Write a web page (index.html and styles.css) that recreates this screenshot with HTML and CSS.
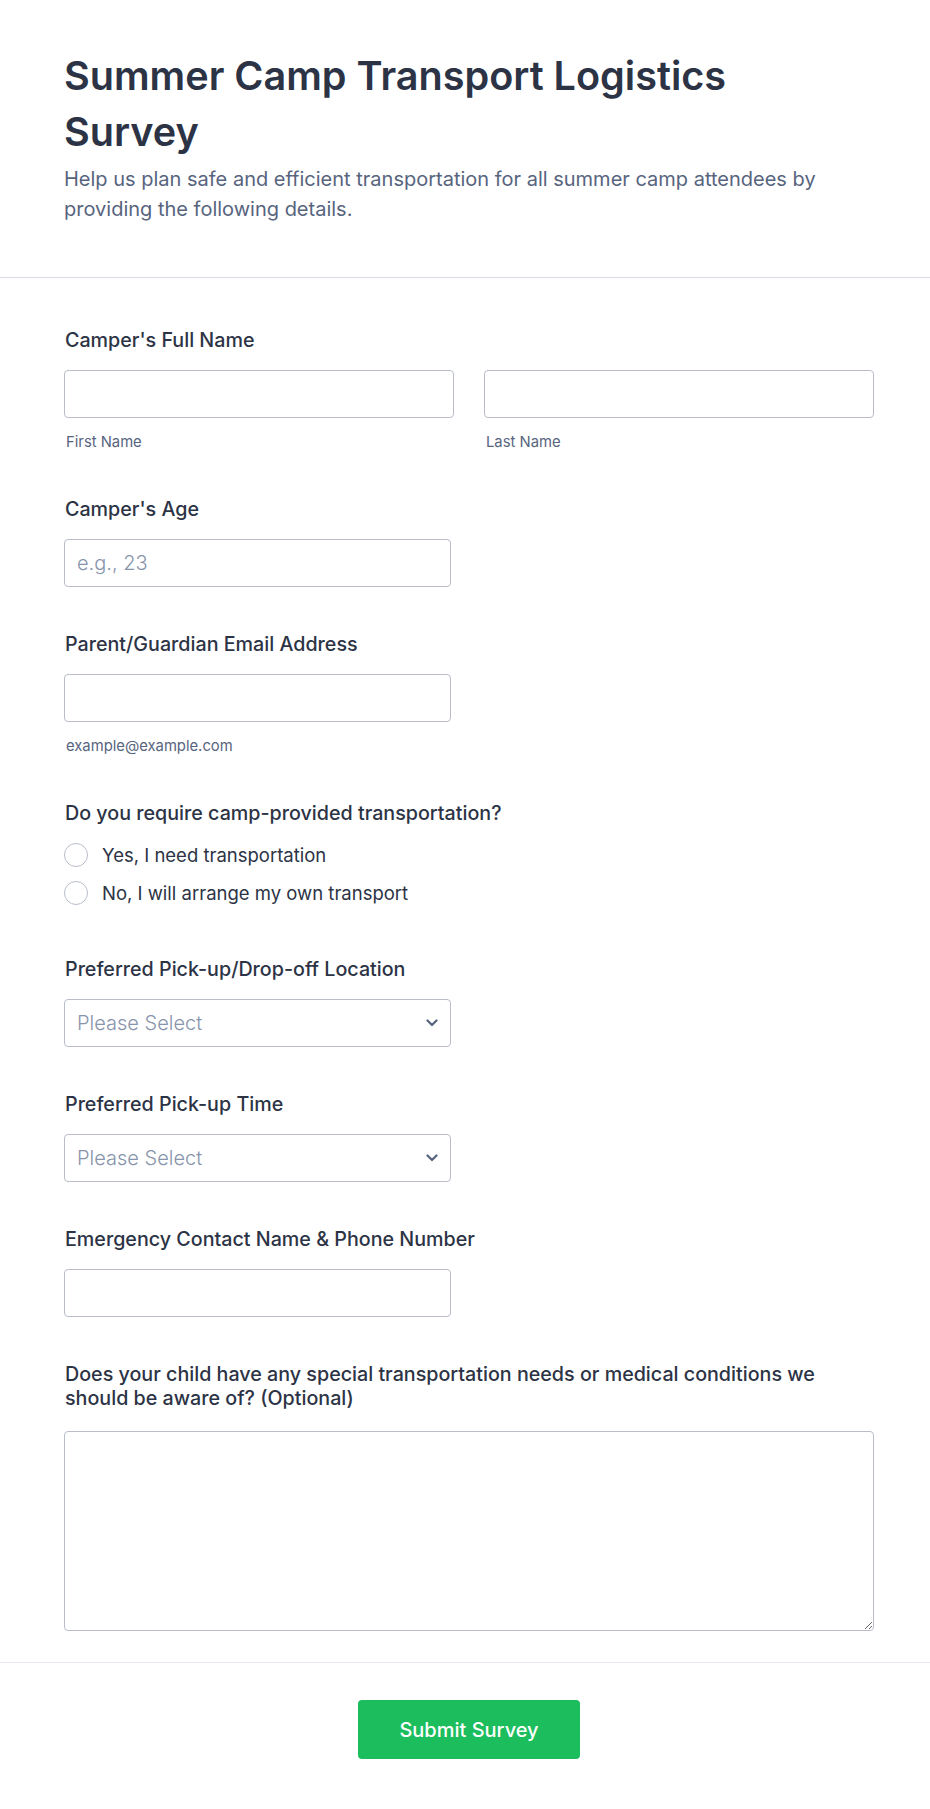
FILE: index.html
```html
<!DOCTYPE html>
<html lang="en">
<head>
<meta charset="utf-8">
<title>Summer Camp Transport Logistics Survey</title>
<link rel="stylesheet" href="styles.css">
</head>
<body>
<div class="page">
  <header class="header">
    <h1 class="title">Summer Camp Transport Logistics Survey</h1>
    <p class="subtitle">Help us plan safe and efficient transportation for all summer camp attendees by providing the following details.</p>
  </header>

  <form class="form">
    <div class="field">
      <div class="label">Camper's Full Name</div>
      <div class="name-grid">
        <div>
          <input class="input input-full" type="text">
          <div class="sublabel">First Name</div>
        </div>
        <div>
          <input class="input input-full" type="text">
          <div class="sublabel">Last Name</div>
        </div>
      </div>
    </div>

    <div class="field">
      <div class="label">Camper's Age</div>
      <input class="input input-half" type="text" placeholder="e.g., 23">
    </div>

    <div class="field">
      <div class="label">Parent/Guardian Email Address</div>
      <input class="input input-half" type="email">
      <div class="sublabel">example@example.com</div>
    </div>

    <div class="field">
      <div class="label">Do you require camp-provided transportation?</div>
      <div class="options">
        <label class="option"><span class="radio"></span><span>Yes, I need transportation</span></label>
        <label class="option"><span class="radio"></span><span>No, I will arrange my own transport</span></label>
      </div>
    </div>

    <div class="field">
      <div class="label">Preferred Pick-up/Drop-off Location</div>
      <div class="select input-half">
        <span class="select-text">Please Select</span>
        <svg class="chevron" width="12" height="8" viewBox="0 0 12 8"><path d="M1.5 1.5 L6 6 L10.5 1.5" fill="none" stroke="#57647e" stroke-width="2.2" stroke-linecap="round" stroke-linejoin="round"/></svg>
      </div>
    </div>

    <div class="field">
      <div class="label">Preferred Pick-up Time</div>
      <div class="select input-half">
        <span class="select-text">Please Select</span>
        <svg class="chevron" width="12" height="8" viewBox="0 0 12 8"><path d="M1.5 1.5 L6 6 L10.5 1.5" fill="none" stroke="#57647e" stroke-width="2.2" stroke-linecap="round" stroke-linejoin="round"/></svg>
      </div>
    </div>

    <div class="field">
      <div class="label">Emergency Contact Name &amp; Phone Number</div>
      <input class="input input-half" type="text">
    </div>

    <div class="field field-last">
      <div class="label label-wide">Does your child have any special transportation needs or medical conditions we should be aware of? (Optional)</div>
      <textarea class="textarea"></textarea>
    </div>
  </form>

  <footer class="footer">
    <button class="submit" type="button">Submit Survey</button>
  </footer>
</div>
</body>
</html>
```

FILE: styles.css
```css
* {
  box-sizing: border-box;
}

html, body {
  margin: 0;
  padding: 0;
  background: #ffffff;
}

body {
  font-family: Inter, "Noto Sans", "Liberation Sans", sans-serif;
  color: #2c3345;
}

.header {
  padding: 48px 56px 53px 64px;
  border-bottom: 1px solid #d9dbe8;
}

.title {
  margin: 0;
  max-width: 720px;
  font-size: 39.6px;
  line-height: 56px;
  font-weight: 600;
  color: #2c3345;
}

.subtitle {
  margin: 4px 0 0;
  font-size: 20px;
  line-height: 30px;
  font-weight: 400;
  color: #57647e;
}

.form {
  padding: 50px 56px 31px 64px;
}

.field {
  margin-bottom: 45px;
}

.field-last {
  margin-bottom: 0;
}

.label {
  font-size: 19.7px;
  line-height: 24px;
  font-weight: 500;
  color: #2c3345;
  margin-bottom: 18px;
  padding-left: 1px;
}

.label-wide {
  margin-bottom: 21px;
}

.name-grid {
  display: grid;
  grid-template-columns: 1fr 1fr;
  column-gap: 30px;
}

.input {
  display: block;
  height: 48px;
  border: 1px solid #b8bdc9;
  border-radius: 4px;
  background: #fff;
  padding: 0 12px;
  font-family: inherit;
  font-size: 20px;
  font-weight: 300;
  color: #2c3345;
  outline: none;
}

.input::placeholder {
  color: #8894ab;
  font-weight: 300;
}

.input-full {
  width: 100%;
}

.input-half {
  width: 387px;
}

.sublabel {
  margin-top: 14px;
  font-size: 14.8px;
  line-height: 20px;
  color: #57647e;
  padding-left: 2px;
}

.options {
  margin-top: -7px;
}

.option {
  display: flex;
  align-items: center;
  height: 38px;
  gap: 14px;
  font-size: 18.5px;
  color: #2c3345;
}

.radio {
  width: 24px;
  height: 24px;
  border: 1px solid #b8bdc9;
  border-radius: 50%;
  background: #fff;
  flex: none;
}

.select {
  display: flex;
  align-items: center;
  justify-content: space-between;
  height: 48px;
  border: 1px solid #b8bdc9;
  border-radius: 4px;
  padding: 0 12px;
  background: #fff;
}

.select-text {
  font-size: 20px;
  font-weight: 300;
  color: #8894ab;
}

.chevron {
  display: block;
}

.textarea {
  display: block;
  width: 100%;
  height: 200px;
  border: 1px solid #b8bdc9;
  border-radius: 4px;
  font-family: inherit;
  font-size: 18px;
  padding: 10px 12px;
  resize: vertical;
  outline: none;
}

.footer {
  border-top: 1px solid #e6e8f2;
  padding: 37px 56px 50px 64px;
  display: flex;
  justify-content: center;
}

.submit {
  width: 222px;
  height: 59px;
  border: none;
  border-radius: 4px;
  background: #1bbd5d;
  color: #ffffff;
  font-family: inherit;
  font-size: 20px;
  font-weight: 500;
  cursor: pointer;
}
```
